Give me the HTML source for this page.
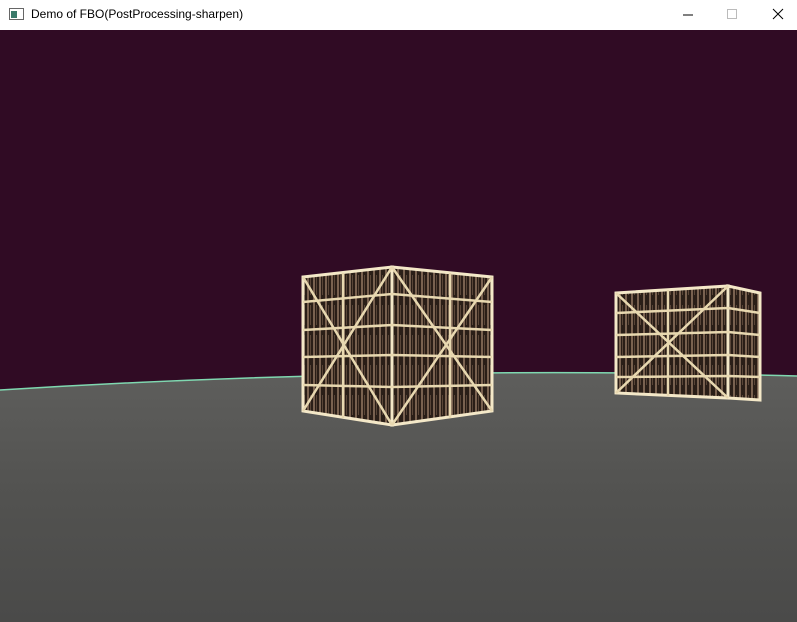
<!DOCTYPE html>
<html><head><style>
body{margin:0;width:797px;height:622px;overflow:hidden;background:#fff;font-family:"Liberation Sans","Noto Sans CJK SC",sans-serif}
.t{position:absolute;left:0;top:0;width:797px;height:30px;background:#fff}
.t span{position:absolute;left:31px;top:7px;font-size:12px;color:#000}
</style></head><body>
<div class="t">
<svg width="797" height="30" style="position:absolute;left:0;top:0">
<rect x="9.5" y="8.5" width="14" height="11" fill="#fff" stroke="#666"/><rect x="11" y="11" width="6" height="7" fill="#3a7a6a"/>
<line x1="683" y1="15" x2="693" y2="15" stroke="#000"/>
<rect x="727.5" y="9.5" width="9" height="9" fill="none" stroke="#bbb"/>
<path d="M773 9L783 19M783 9L773 19" stroke="#000"/>
</svg><span>Demo of FBO(PostProcessing-sharpen)</span></div>
<svg width="797" height="592" style="position:absolute;left:0;top:30px">
<defs>
<linearGradient id="g" x1="0" y1="0" x2="0" y2="1"><stop offset="0" stop-color="#5e5e5c"/><stop offset=".5" stop-color="#525250"/><stop offset="1" stop-color="#4a4a49"/></linearGradient>
<pattern id="w" width="6" height="30" patternUnits="userSpaceOnUse"><rect width="6" height="30" fill="#2a1e17"/><rect x="1" width="2" height="30" fill="#7a6250"/><rect x="4" y="5" width="1" height="20" fill="#5a4638"/></pattern>
</defs>
<rect width="797" height="592" fill="#300b24"/>
<path d="M0 360 Q400 335 797 346 L797 592 L0 592Z" fill="url(#g)"/>
<path d="M0 360 Q400 335 797 346" stroke="#7fd8b0" stroke-width="1.5" fill="none"/>
<g stroke="#f4e8c8" stroke-width="3" fill="url(#w)">
<path d="M303 247L392 237L392 395L303 381Z"/>
<path d="M392 237L492 247L492 381L392 395Z"/>
<path d="M616 263L728 256L728 368L616 363Z"/>
<path d="M728 256L760 263L760 370L728 368Z"/>
</g>
<g stroke="#e8d8b0" stroke-width="2.5" fill="none">
<path d="M303 247L392 395M392 237L303 381M392 237L492 381M492 247L392 395"/>
<path d="M343 243V388M450 243V388M303 272L392 264L492 272M303 300L392 295L492 300M303 327L392 325L492 327M303 355L392 357L492 355"/>
<path d="M616 263L728 368M728 256L616 363M668 260V366M616 283L728 278L760 283M616 305L728 302L760 305M616 327L728 325L760 327M616 347L728 346L760 347"/>
</g>
</svg>
</body></html>
